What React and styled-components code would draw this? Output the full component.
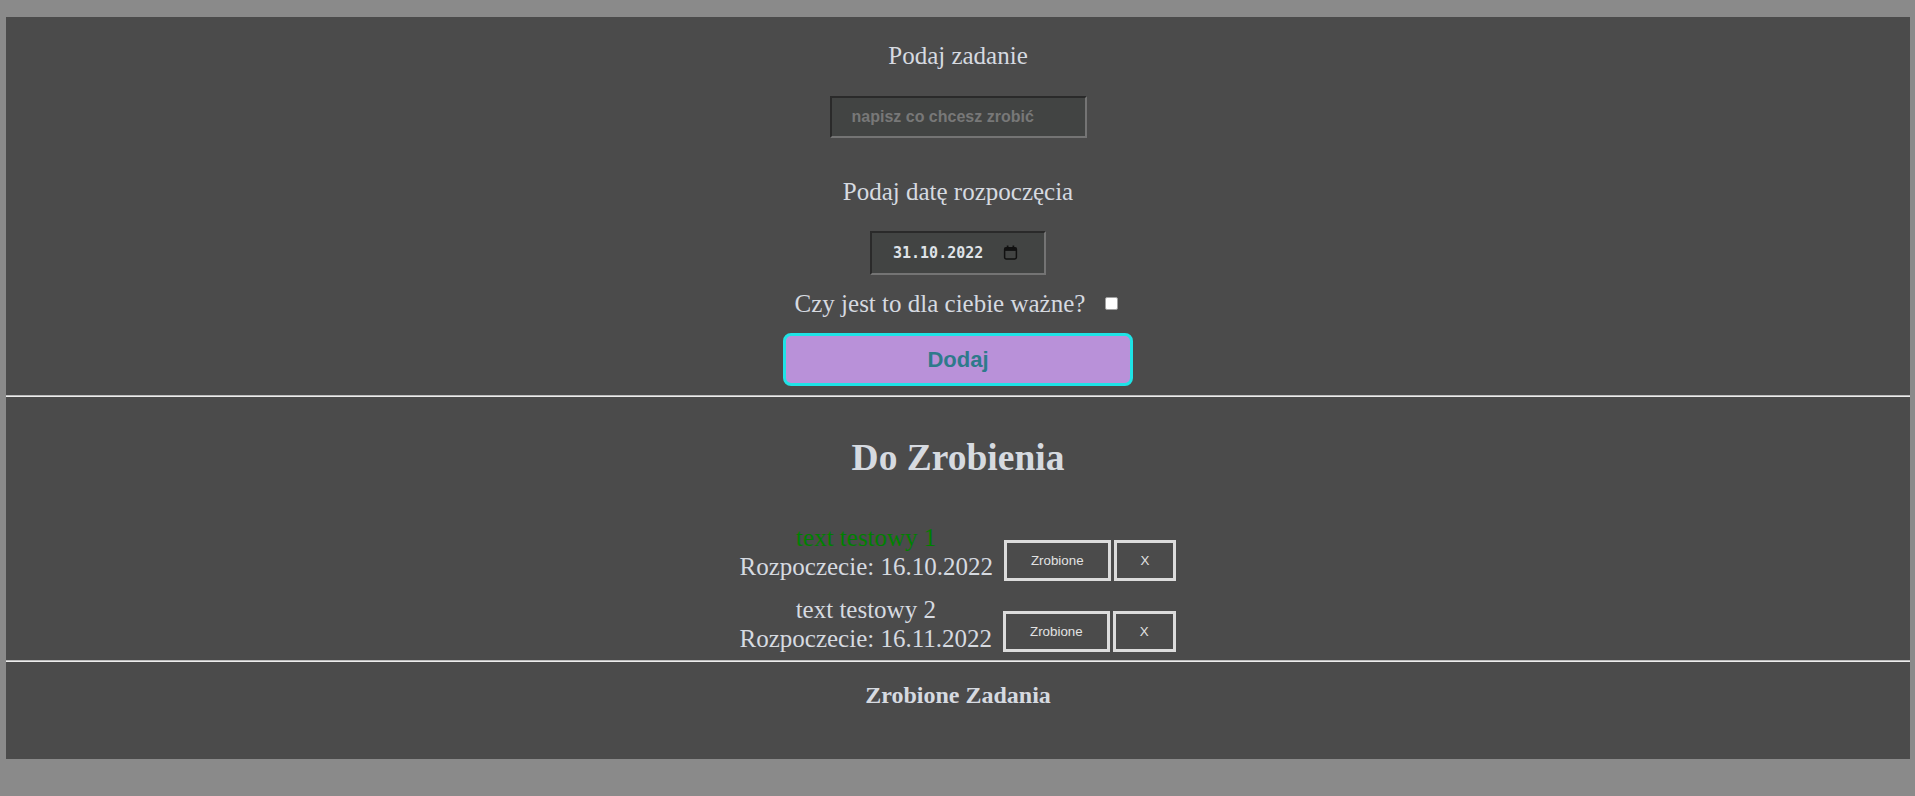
import React from 'react'
import styled, { createGlobalStyle } from 'styled-components';

const GlobalStyle = createGlobalStyle`
    html, body {
        margin: 0;
        background: #8a8a8a;
    }
    body {
        padding: 17px 5px 0 6px;
        font-family: "Liberation Serif", "Times New Roman", serif;
    }
`;

const Panel = styled.main`
    background: #4b4b4b;
    color: #d6dae0;
    display: flex;
    flex-direction: column;
    align-items: center;
    padding-bottom: 49px;
`;

const Label = styled.label`
    display: block;
    font-size: 25px;
    line-height: 1.15;
    margin-top: ${p => p.$top}px;
`;

const TextInput = styled.input`
    box-sizing: border-box;
    width: 257px;
    height: 42px;
    margin: 25px 0 0;
    padding: 0 20px;
    background: #424443;
    border: 2px solid;
    border-color: #2a2a2a #747474 #747474 #2a2a2a;
    color: #d6dae0;
    font-family: "Liberation Sans", Arial, sans-serif;
    font-weight: bold;
    font-size: 16px;
    outline: none;
    &::placeholder {
        color: #787878;
    }
`;

const DateField = styled.div`
    box-sizing: border-box;
    width: 176px;
    height: 44px;
    margin-top: 24px;
    padding: 0 0 0 21px;
    display: flex;
    align-items: center;
    background: #424443;
    border: 2px solid;
    border-color: #2a2a2a #747474 #747474 #2a2a2a;
    color: #dfe3e8;
    font-family: "DejaVu Sans Mono", "Liberation Mono", monospace;
    font-weight: bold;
    font-size: 15px;
`;

const CalendarIcon = styled.svg`
    margin-left: 20px;
    width: 15px;
    height: 15px;
`;

const CheckRow = styled.div`
    display: flex;
    align-items: center;
    gap: 20px;
    margin-top: 15px;
    font-size: 25px;
    line-height: 1.15;
    padding-right: 3px;
`;

const Check = styled.input`
    appearance: none;
    margin: 0;
    width: 13px;
    height: 13px;
    background: #fff;
    border: 1px solid #a0a0a0;
    border-radius: 2px;
`;

const AddButton = styled.button`
    box-sizing: border-box;
    width: 350px;
    height: 53px;
    margin-top: 15px;
    background: #b991d9;
    border: 3px solid #1fe3e6;
    border-radius: 8px;
    color: #2e7a8b;
    font-family: "Liberation Sans", Arial, sans-serif;
    font-weight: bold;
    font-size: 22px;
`;

const Rule = styled.hr`
    align-self: stretch;
    margin: ${p => p.$top}px 0 0;
    border: none;
    border-top: 1px solid #bcbcbc;
    border-bottom: 1px solid #ededed;
`;

const Title = styled.h2`
    margin: 39px 0 0;
    font-size: 37.5px;
    line-height: 1.15;
    font-weight: bold;
`;

const SubTitle = styled.h4`
    margin: 20px 0 0;
    font-size: 24px;
    line-height: 1.15;
    font-weight: bold;
`;

const TaskList = styled.ul`
    list-style: none;
    margin: 45px 0 0;
    padding: 0;
    display: flex;
    flex-direction: column;
    gap: 14px;
`;

const Task = styled.li`
    display: flex;
    align-items: flex-end;
    gap: 11px;
`;

const TaskText = styled.div`
    text-align: center;
    font-size: 25px;
    line-height: 1.15;
`;

const TaskName = styled.div`
    color: ${p => (p.$important ? '#008000' : 'inherit')};
`;

const Actions = styled.div`
    display: flex;
    gap: 3px;
    margin-bottom: 1px;
`;

const SmallButton = styled.button`
    box-sizing: border-box;
    height: 41px;
    padding: 0 24px;
    background: transparent;
    border: 3px solid #dcdcdc;
    color: #e2e2e2;
    font-family: "Liberation Sans", Arial, sans-serif;
    font-size: 13.33px;
`;

const tasks = [
    { name: 'text testowy 1', date: '16.10.2022', important: true },
    { name: 'text testowy 2', date: '16.11.2022', important: false },
];

function App() {
    return (
        <>
            <GlobalStyle />
            <Panel>
                <Label $top={25} htmlFor="task">Podaj zadanie</Label>
                <TextInput id="task" type="text" placeholder="napisz co chcesz zrobić" />
                <Label $top={40}>Podaj datę rozpoczęcia</Label>
                <DateField>
                    <span>31.10.2022</span>
                    <CalendarIcon viewBox="0 0 14 14">
                        <rect x="1.5" y="2.5" width="11" height="10.5" rx="1.5" fill="none" stroke="#111" strokeWidth="1.4" />
                        <rect x="1.5" y="2.5" width="11" height="3" fill="#111" />
                        <rect x="3.5" y="0.5" width="1.6" height="3" fill="#111" />
                        <rect x="8.9" y="0.5" width="1.6" height="3" fill="#111" />
                    </CalendarIcon>
                </DateField>
                <CheckRow>
                    <span>Czy jest to dla ciebie ważne?</span>
                    <Check type="checkbox" />
                </CheckRow>
                <AddButton>Dodaj</AddButton>
                <Rule $top={9} />
                <Title>Do Zrobienia</Title>
                <TaskList>
                    {tasks.map(t => (
                        <Task key={t.name}>
                            <TaskText>
                                <TaskName $important={t.important}>{t.name}</TaskName>
                                <div>Rozpoczecie: {t.date}</div>
                            </TaskText>
                            <Actions>
                                <SmallButton>Zrobione</SmallButton>
                                <SmallButton>X</SmallButton>
                            </Actions>
                        </Task>
                    ))}
                </TaskList>
                <Rule $top={7} />
                <SubTitle>Zrobione Zadania</SubTitle>
            </Panel>
        </>
    )
}

export default App
